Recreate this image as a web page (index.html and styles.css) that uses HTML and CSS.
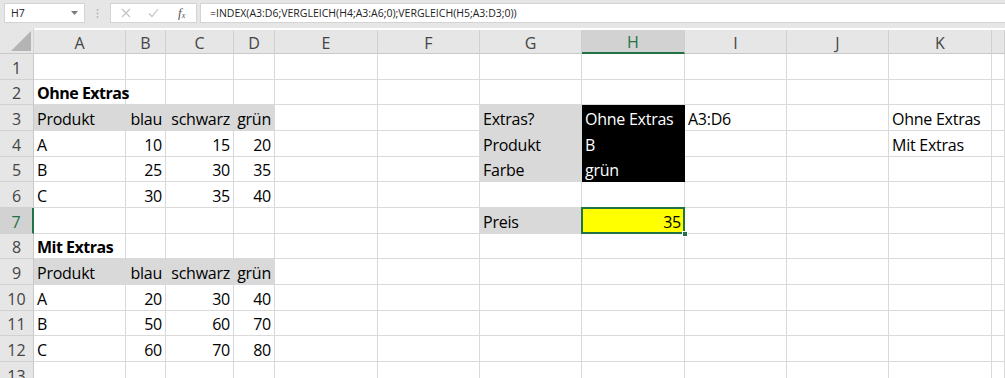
FILE: index.html
```html
<!DOCTYPE html>
<html lang="de">
<head>
<meta charset="utf-8">
<title>Excel INDEX VERGLEICH</title>
<link rel="stylesheet" href="styles.css">
</head>
<body>
<div class="bar">
  <div class="namebox"><span>H7</span>
    <svg class="dd" width="7" height="4" viewBox="0 0 7 4"><path d="M0 0h7L3.5 4z" fill="#7a7a7a"/></svg>
  </div>
  <div class="grip">
    <svg width="3" height="9" viewBox="0 0 3 9"><circle cx="1.5" cy="1" r="0.9" fill="#b5b5b5"/><circle cx="1.5" cy="4.5" r="0.9" fill="#b5b5b5"/><circle cx="1.5" cy="8" r="0.9" fill="#b5b5b5"/></svg>
  </div>
  <div class="fxbtns">
    <svg width="10" height="10" viewBox="0 0 10 10"><path d="M1 1L9 9M9 1L1 9" stroke="#c2c2c2" stroke-width="1.2"/></svg>
    <svg width="11" height="10" viewBox="0 0 11 10"><path d="M1 5.5L4 8.5L10 1" stroke="#c2c2c2" stroke-width="1.2" fill="none"/></svg>
    <span class="fx">f<sub>x</sub></span>
  </div>
  <div class="formula">=INDEX(A3:D6;VERGLEICH(H4;A3:A6;0);VERGLEICH(H5;A3:D3;0))</div>
</div>

<div class="sheet">
  <div class="corner"><svg width="20" height="20" viewBox="0 0 20 20"><path d="M20 0V20H0z" fill="#b4b4b4"/></svg></div>
  <div class="ch">A</div><div class="ch">B</div><div class="ch">C</div><div class="ch">D</div><div class="ch">E</div><div class="ch">F</div><div class="ch">G</div><div class="ch sel">H</div><div class="ch">I</div><div class="ch">J</div><div class="ch">K</div><div class="ch"></div>

  <div class="rh">1</div><div class="c"></div><div class="c"></div><div class="c"></div><div class="c"></div><div class="c"></div><div class="c"></div><div class="c"></div><div class="c"></div><div class="c"></div><div class="c"></div><div class="c"></div><div class="c"></div>

  <div class="rh">2</div><div class="c b">Ohne Extras</div><div class="c"></div><div class="c"></div><div class="c"></div><div class="c"></div><div class="c"></div><div class="c"></div><div class="c"></div><div class="c"></div><div class="c"></div><div class="c"></div><div class="c"></div>

  <div class="rh">3</div><div class="c g">Produkt</div><div class="c g r">blau</div><div class="c g r">schwarz</div><div class="c g r">grün</div><div class="c"></div><div class="c"></div><div class="c g">Extras?</div><div class="c k">Ohne Extras</div><div class="c">A3:D6</div><div class="c"></div><div class="c">Ohne Extras</div><div class="c"></div>

  <div class="rh">4</div><div class="c">A</div><div class="c r">10</div><div class="c r">15</div><div class="c r">20</div><div class="c"></div><div class="c"></div><div class="c g">Produkt</div><div class="c k">B</div><div class="c"></div><div class="c"></div><div class="c">Mit Extras</div><div class="c"></div>

  <div class="rh">5</div><div class="c">B</div><div class="c r">25</div><div class="c r">30</div><div class="c r">35</div><div class="c"></div><div class="c"></div><div class="c g">Farbe</div><div class="c k">grün</div><div class="c"></div><div class="c"></div><div class="c"></div><div class="c"></div>

  <div class="rh">6</div><div class="c">C</div><div class="c r">30</div><div class="c r">35</div><div class="c r">40</div><div class="c"></div><div class="c"></div><div class="c"></div><div class="c"></div><div class="c"></div><div class="c"></div><div class="c"></div><div class="c"></div>

  <div class="rh sel">7</div><div class="c"></div><div class="c"></div><div class="c"></div><div class="c"></div><div class="c"></div><div class="c"></div><div class="c g">Preis</div><div class="c y r active">35<span class="handle"></span></div><div class="c"></div><div class="c"></div><div class="c"></div><div class="c"></div>

  <div class="rh">8</div><div class="c b">Mit Extras</div><div class="c"></div><div class="c"></div><div class="c"></div><div class="c"></div><div class="c"></div><div class="c"></div><div class="c"></div><div class="c"></div><div class="c"></div><div class="c"></div><div class="c"></div>

  <div class="rh">9</div><div class="c g">Produkt</div><div class="c g r">blau</div><div class="c g r">schwarz</div><div class="c g r">grün</div><div class="c"></div><div class="c"></div><div class="c"></div><div class="c"></div><div class="c"></div><div class="c"></div><div class="c"></div><div class="c"></div>

  <div class="rh">10</div><div class="c">A</div><div class="c r">20</div><div class="c r">30</div><div class="c r">40</div><div class="c"></div><div class="c"></div><div class="c"></div><div class="c"></div><div class="c"></div><div class="c"></div><div class="c"></div><div class="c"></div>

  <div class="rh">11</div><div class="c">B</div><div class="c r">50</div><div class="c r">60</div><div class="c r">70</div><div class="c"></div><div class="c"></div><div class="c"></div><div class="c"></div><div class="c"></div><div class="c"></div><div class="c"></div><div class="c"></div>

  <div class="rh">12</div><div class="c">C</div><div class="c r">60</div><div class="c r">70</div><div class="c r">80</div><div class="c"></div><div class="c"></div><div class="c"></div><div class="c"></div><div class="c"></div><div class="c"></div><div class="c"></div><div class="c"></div>

  <div class="rh">13</div><div class="c"></div><div class="c"></div><div class="c"></div><div class="c"></div><div class="c"></div><div class="c"></div><div class="c"></div><div class="c"></div><div class="c"></div><div class="c"></div><div class="c"></div><div class="c"></div>
</div>
</body>
</html>
```

FILE: styles.css
```css
* { box-sizing: border-box; }

body {
  margin: 0;
  width: 1005px;
  height: 378px;
  overflow: hidden;
  background: #fff;
  font-family: "Open Sans", "Noto Sans", sans-serif;
  color: #000;
}

/* ---------- formula bar ---------- */
.bar {
  height: 28px;
  background: #e6e6e6;
  display: flex;
  align-items: flex-start;
  padding-top: 3px;
}

.namebox {
  margin-left: 4px;
  width: 81px;
  height: 20px;
  background: #fff;
  border: 1px solid #d4d4d4;
  display: flex;
  align-items: center;
  padding: 0 6px 0 6px;
  font-size: 10.5px;
  color: #222;
}

.namebox .dd { margin-left: auto; }

.grip {
  width: 25px;
  height: 20px;
  display: flex;
  align-items: center;
  justify-content: center;
}

.fxbtns {
  width: 87px;
  height: 20px;
  background: #fff;
  border: 1px solid #d4d4d4;
  display: flex;
  align-items: center;
  padding-left: 10px;
  gap: 17px;
}

.fx {
  font-family: "Liberation Serif", serif;
  font-style: italic;
  font-size: 13px;
  color: #555;
  line-height: 1;
  margin-left: 2px;
}

.fx sub { font-size: 8px; vertical-align: -1px; }

.formula {
  margin-left: 3px;
  flex: 1;
  height: 20px;
  background: #fff;
  border: 1px solid #d4d4d4;
  border-right: none;
  padding-left: 9px;
  display: flex;
  align-items: center;
  font-size: 10.5px;
  color: #222;
  white-space: nowrap;
}

/* ---------- sheet grid ---------- */
.sheet {
  display: grid;
  grid-template-columns: 34px 92px 40px 68px 41px 103px 102px 102px 103px 102px 102px 103px 13px;
  grid-template-rows: 26px;
  grid-auto-rows: 25.67px;
}

.corner {
  background: #e6e6e6;
  border-right: 1px solid #d4d4d4;
  border-bottom: 1px solid #c9c9c9;
  display: flex;
  align-items: flex-end;
  justify-content: flex-end;
  padding: 0 2px 2px 0;
}

.ch {
  background: #e6e6e6;
  border-right: 1px solid #d0d0d0;
  border-bottom: 1px solid #c9c9c9;
  display: flex;
  justify-content: center;
  align-items: flex-end;
  font-size: 16px;
  line-height: 20px;
  color: #444;
  margin-top: 2px;
}

.ch.sel {
  background: #d2d2d2;
  color: #217346;
  border-bottom: 2px solid #217346;
}

.rh {
  background: #e6e6e6;
  border-right: 1px solid #c9c9c9;
  border-bottom: 1px solid #d0d0d0;
  display: flex;
  justify-content: center;
  align-items: flex-end;
  padding-bottom: 1px;
  font-size: 16px;
  line-height: 20px;
  color: #444;
}

.rh.sel {
  background: #d2d2d2;
  color: #217346;
  border-right: 2px solid #217346;
}

.c {
  border-right: 1px solid #dadada;
  border-bottom: 1px solid #dadada;
  display: flex;
  align-items: flex-end;
  padding: 0 3px 1px 3px;
  font-size: 16px;
  line-height: 20px;
  letter-spacing: -0.25px;
  white-space: nowrap;
}

.c.r { justify-content: flex-end; }
.c.b { font-weight: 700; letter-spacing: -0.5px; }

.c.g { background: #d9d9d9; border-color: transparent; }
.c.k { background: #000; color: #fff; border-color: transparent; }
.c.y { background: #ffff00; }

.c.active { position: relative; }

.c.active::after {
  content: "";
  position: absolute;
  left: -1px;
  top: -1px;
  right: -1px;
  bottom: -1px;
  border: 2px solid #217346;
}

.handle {
  position: absolute;
  right: -4px;
  bottom: -4px;
  width: 6px;
  height: 6px;
  background: #217346;
  border: 1px solid #fff;
  z-index: 2;
}
```
